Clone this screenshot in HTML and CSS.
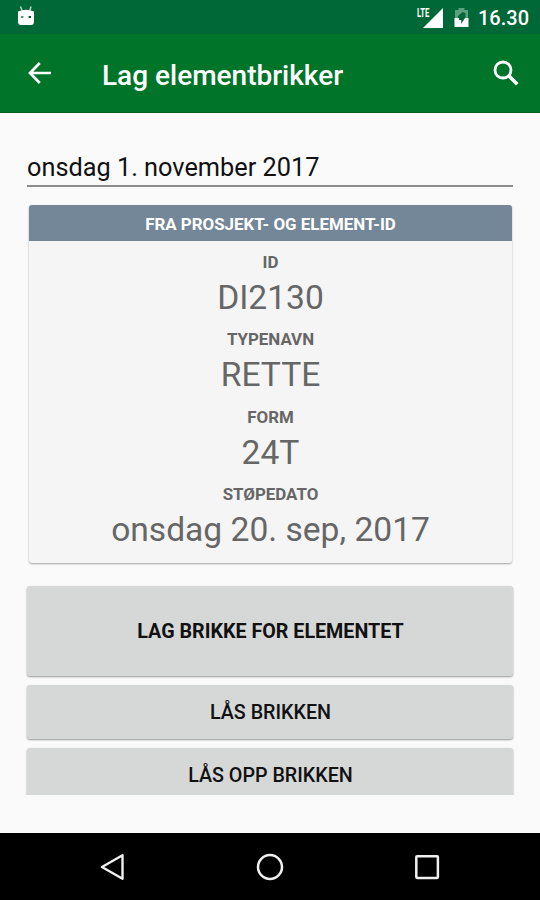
FILE: index.html
```html
<!DOCTYPE html>
<html lang="no">
<head>
    <meta charset="UTF-8">
    <meta name="viewport" content="width=device-width, initial-scale=1.0">
    <title>Lag elementbrikker</title>
    <link rel="stylesheet" href="styles.css">
</head>
<body>
    <div class="screen">
        <div class="status-bar">
            <svg class="debug-icon" width="18" height="21" viewBox="0 0 18 21">
                <path d="M3.5 1.5L5 5.5M14 1.5L12.8 5.5" stroke="#b9d8c9" stroke-width="1.5" fill="none"/>
                <path d="M1 6.5Q9 3 17 6.5V16.5Q17 20 14 20H4Q1 20 1 16.5Z" fill="#fff"/>
                <rect x="4" y="11" width="2.4" height="2" fill="#4d9273"/>
                <rect x="11.6" y="11" width="2.4" height="2" fill="#00592f"/>
            </svg>
            <div class="status-right">
                <div class="signal">
                    <span class="lte">LTE</span>
                    <svg width="20" height="20" viewBox="0 0 20 20"><path d="M20 0V20H0Z" fill="#fff"/></svg>
                </div>
                <svg class="battery" width="15" height="21" viewBox="0 0 15 21">
                    <path d="M4.5 3V1H10.5V3H14V11H11.5V6L8.5 5L4 9V11H1V3Z" fill="#5c9f7e"/>
                    <path d="M0.5 11H5V13H7.2V17L11 11H14.5V20H0.5Z" fill="#fff"/>
                </svg>
                <span class="clock">16.30</span>
            </div>
        </div>

        <div class="app-bar">
            <svg width="24" height="22" viewBox="0 0 24 22">
                <path d="M23 11H2M11.8 1L2 11L11.8 21" fill="none" stroke="#fff" stroke-width="2.7"/>
            </svg>
            <h1>Lag elementbrikker</h1>
            <svg width="26" height="26" viewBox="0 0 26 26">
                <circle cx="10" cy="10" r="8" fill="none" stroke="#fff" stroke-width="2.8"/>
                <path d="M15.5 15.5L24.3 24.3" stroke="#fff" stroke-width="3.5"/>
            </svg>
        </div>

        <div class="content">
            <div class="date-field">onsdag 1. november 2017</div>

            <div class="card">
                <div class="card-header">FRA PROSJEKT- OG ELEMENT-ID</div>
                <dl class="card-body">
                    <dt>ID</dt>
                    <dd>DI2130</dd>
                    <dt>TYPENAVN</dt>
                    <dd>RETTE</dd>
                    <dt>FORM</dt>
                    <dd>24T</dd>
                    <dt>STØPEDATO</dt>
                    <dd>onsdag 20. sep, 2017</dd>
                </dl>
            </div>

            <div class="buttons">
                <button class="btn btn-main">LAG BRIKKE FOR ELEMENTET</button>
                <button class="btn">LÅS BRIKKEN</button>
                <button class="btn">LÅS OPP BRIKKEN</button>
            </div>
        </div>

        <div class="nav-bar">
            <svg width="28" height="28" viewBox="0 0 28 28">
                <path d="M24.5 2.2V25.8L4 14Z" fill="none" stroke="#f0f0f0" stroke-width="2.4" stroke-linejoin="round"/>
            </svg>
            <svg width="28" height="28" viewBox="0 0 28 28">
                <circle cx="14" cy="14" r="12" fill="none" stroke="#f0f0f0" stroke-width="2.5"/>
            </svg>
            <svg width="28" height="28" viewBox="0 0 28 28">
                <rect x="3.3" y="3.3" width="21.6" height="21.6" rx="0.8" fill="none" stroke="#f0f0f0" stroke-width="2.5"/>
            </svg>
        </div>
    </div>
</body>
</html>
```
FILE: styles.css
```css
* {
    box-sizing: border-box;
}
body {
    margin: 0;
    font-family: Roboto, sans-serif;
    background-color: #fafafa;
}
svg {
    display: block;
    flex: none;
}
.screen {
    display: flex;
    flex-direction: column;
    width: 540px;
    height: 900px;
    overflow: hidden;
}
.status-bar {
    display: flex;
    justify-content: space-between;
    height: 34px;
    padding: 5px 11px 0 17px;
    background-color: #006837;
    color: #fff;
}
.status-right {
    display: flex;
}
.signal {
    display: flex;
    padding-top: 2.5px;
}
.lte {
    width: 13px;
    height: 12px;
    margin: 0 -7px 0 0;
    font-size: 12px;
    font-weight: 700;
    line-height: 11px;
    transform: scaleX(0.64);
    transform-origin: left;
}
.battery {
    margin: 2px 9px 0 11px;
}
.clock {
    font-size: 20px;
    font-weight: 500;
    line-height: 27px;
}
.app-bar {
    display: flex;
    align-items: center;
    height: 79px;
    padding: 0 21px 0 28px;
    background-color: #007429;
    border-bottom: 1px solid #00601c;
}
h1 {
    flex: 1;
    margin: 5px 0 0 50px;
    font-size: 28px;
    font-weight: 500;
    line-height: 36px;
    color: #fff;
}
.content {
    flex: none;
    height: 682px;
    padding: 37px 27px 0;
    overflow: hidden;
}
.date-field {
    height: 37px;
    padding-top: 1px;
    font-size: 25.3px;
    line-height: 34px;
    color: #111;
    border-bottom: 2px solid #8b8b8b;
}
.card {
    height: 358px;
    margin: 18px 1px 0 2px;
    background-color: #f5f5f5;
    border-radius: 3px;
    box-shadow: 0 1px 2px rgba(0, 0, 0, 0.35);
    overflow: hidden;
}
.card-header {
    height: 36px;
    font-size: 16.9px;
    font-weight: 700;
    line-height: 38px;
    text-align: center;
    color: #fff;
    background-color: #748799;
}
.card-body {
    margin: 0;
    padding-top: 9px;
    text-align: center;
    color: #666;
}
dt {
    font-size: 16.9px;
    font-weight: 700;
    line-height: 25px;
}
dd {
    margin: 0 0 7.4px;
    font-size: 33.6px;
    line-height: 45px;
}
.buttons {
    display: flex;
    flex-direction: column;
    gap: 9px;
    margin-top: 22.5px;
}
.btn {
    flex: none;
    height: 54px;
    padding: 1px 0 0 1px;
    font-family: inherit;
    font-size: 19.7px;
    font-weight: 500;
    color: #111;
    background-color: #d6d8d7;
    border: none;
    border-radius: 3px;
    box-shadow: 0 1px 2px rgba(0, 0, 0, 0.4);
}
.btn-main {
    height: 90px;
    font-weight: 700;
}
.nav-bar {
    display: flex;
    justify-content: space-between;
    height: 67px;
    margin-top: auto;
    padding: 20px 99px 0 98px;
    background-color: #000;
}
```
